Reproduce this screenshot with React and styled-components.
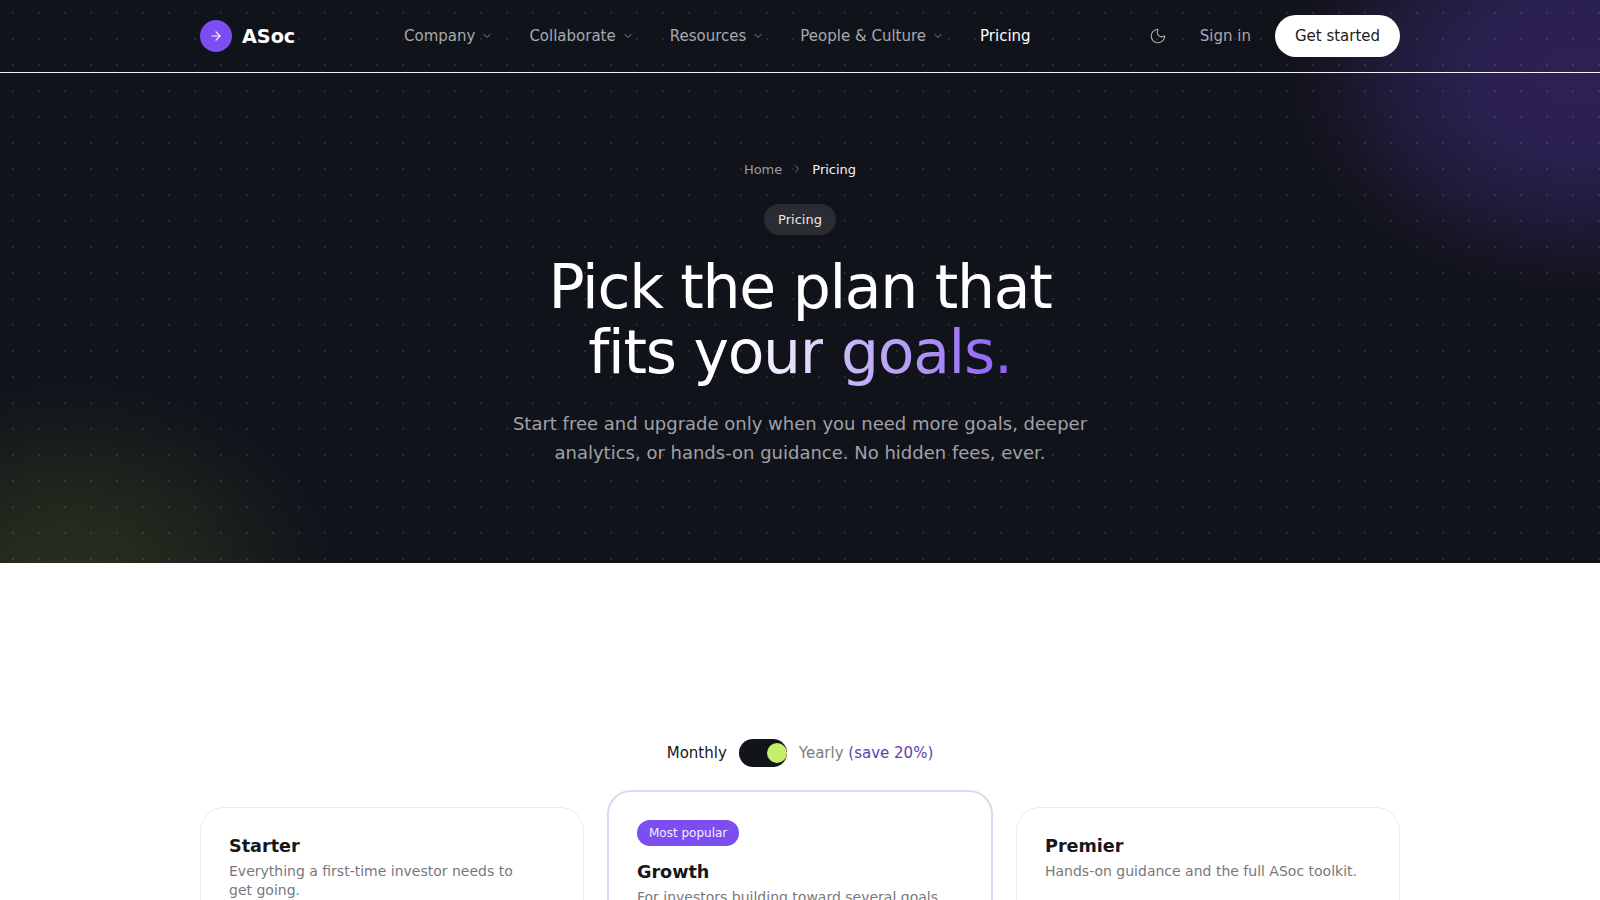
import React from "react";
import styled, { createGlobalStyle } from "styled-components";
import { ArrowRight, ChevronDown, ChevronRight, Moon } from "lucide-react";

const Global = createGlobalStyle`
  html, body { margin: 0; padding: 0; background: #fff; height: 900px; overflow: hidden; }
  body { font-family: "DejaVu Sans", sans-serif; color: #16171b; }
  * { box-sizing: border-box; }
`;

const Dark = styled.div`
  position: relative;
  height: 563px;
  overflow: hidden;
  background-color: #11131b;
  background-image:
    radial-gradient(circle at center, rgba(255,255,255,0.1) 0.8px, transparent 1.1px),
    radial-gradient(ellipse 290px 220px at 1575px 75px, rgb(44,33,82) 0%, rgba(44,33,82,0.95) 35%, rgba(44,33,82,0.55) 65%, rgba(44,33,82,0.18) 85%, rgba(44,33,82,0) 100%),
    radial-gradient(ellipse 275px 205px at 70px 580px, rgb(37,47,30) 0%, rgba(37,47,30,0.85) 30%, rgba(37,47,30,0.4) 65%, rgba(37,47,30,0.12) 85%, rgba(37,47,30,0) 100%);
  background-size: 26px 26px, 100% 100%, 100% 100%;
`;

const Header = styled.header`
  height: 73px;
  border-bottom: 1px solid #f1eff8;
`;

const Bar = styled.div`
  width: 1200px;
  height: 72px;
  margin: 0 auto;
  display: flex;
  align-items: center;
`;

const Brand = styled.div`
  display: flex;
  align-items: center;
  gap: 10px;
  width: 204px;
  font-size: 19.2px;
  font-weight: 700;
  color: #fff;
`;

const BrandMark = styled.span`
  width: 32px;
  height: 32px;
  border-radius: 50%;
  background: #7c4df0;
  color: #fff;
  display: flex;
  align-items: center;
  justify-content: center;
`;

const Nav = styled.nav`
  display: flex;
  align-items: center;
  gap: 36px;
  flex: 1;
`;

const NavItem = styled.a`
  display: flex;
  align-items: center;
  gap: 6px;
  font-size: 15px;
  color: ${(p) => (p.$active ? "#fff" : "#a8a9ad")};
`;

const Actions = styled.div`
  display: flex;
  align-items: center;
  color: #a8a9ad;
  font-size: 15px;
`;

const ThemeButton = styled.span`
  display: flex;
  margin-right: 33px;
`;

const Primary = styled.button`
  margin-left: 24px;
  height: 42px;
  width: 125px;
  border: 0;
  border-radius: 21px;
  background: #fff;
  color: #1b1c20;
  font: 15px "DejaVu Sans", sans-serif;
`;

const Hero = styled.section`
  display: flex;
  flex-direction: column;
  align-items: center;
  padding-top: 88px;
`;

const Crumbs = styled.div`
  display: flex;
  align-items: center;
  gap: 9px;
  height: 16px;
  font-size: 13px;
  color: #9a9ba0;
`;

const CrumbCurrent = styled.span`
  color: #f4f4f5;
`;

const Chip = styled.div`
  margin-top: 27px;
  height: 31px;
  padding: 0 14px;
  border-radius: 16px;
  background: #2a2c31;
  color: #e9e9eb;
  font-size: 13px;
  line-height: 31px;
`;

const Title = styled.h1`
  margin: 20px 0 0;
  font-size: 60px;
  line-height: 65px;
  letter-spacing: -1.3px;
  font-weight: 400;
  color: #fff;
  text-align: center;
`;

const Accent = styled.span`
  background: linear-gradient(90deg, #cbbbf9 0%, #b49bf7 40%, #8b5cf6 100%);
  -webkit-background-clip: text;
  background-clip: text;
  color: transparent;
`;

const FadeWord = styled.span`
  background: linear-gradient(90deg, #fff 35%, #d9cefb 100%);
  -webkit-background-clip: text;
  background-clip: text;
  color: transparent;
`;

const Lead = styled.p`
  margin: 24px 0 0;
  width: 620px;
  font-size: 18px;
  line-height: 29px;
  color: #a0a1a6;
  text-align: center;
`;

const Pricing = styled.section`
  width: 1200px;
  margin: 0 auto;
  padding-top: 176px;
`;

const Toggle = styled.div`
  display: flex;
  justify-content: center;
  align-items: center;
  height: 28px;
  gap: 12px;
  font-size: 15px;
  color: #16171b;
`;

const Yearly = styled.span`
  color: #7b7c82;
`;

const Save = styled.span`
  color: #5b3fb0;
`;

const Switch = styled.span`
  width: 48px;
  height: 28px;
  border-radius: 14px;
  background: #111419;
  display: flex;
  align-items: center;
  justify-content: flex-end;
`;

const Knob = styled.span`
  width: 20px;
  height: 20px;
  border-radius: 50%;
  background: #c5ee6a;
`;

const Cards = styled.div`
  display: grid;
  grid-template-columns: repeat(3, 1fr);
  gap: 24px;
  margin-top: 23px;
  align-items: start;
`;

const Card = styled.article`
  height: 400px;
  margin: ${(p) => (p.$featured ? "0 -1px" : "17px 0 0")};
  padding: ${(p) => (p.$featured ? "28px" : "27px 28px")};
  border-radius: 24px;
  border: ${(p) => (p.$featured ? "2px solid #dcd8f0" : "1px solid #ececf0")};
  background: #fff;
`;

const Badge = styled.span`
  display: inline-block;
  height: 26px;
  padding: 0 12px;
  margin-bottom: 15px;
  border-radius: 13px;
  background: #7c4df0;
  color: #f3eefe;
  font-size: 12px;
  line-height: 26px;
`;

const CardName = styled.h3`
  margin: 0;
  font-size: 17.6px;
  line-height: 23px;
  font-weight: 700;
  color: #16171b;
`;

const CardText = styled.p`
  margin: 4px 0 0;
  text-wrap: pretty;
  font-size: 14px;
  line-height: 19px;
  color: #77787e;
`;

const navItems = ["Company", "Collaborate", "Resources", "People & Culture"];

export default function App() {
  return (
    <>
      <Global />
      <Dark>
        <Header>
          <Bar>
            <Brand>
              <BrandMark><ArrowRight size={14} strokeWidth={2} /></BrandMark>
              ASoc
            </Brand>
            <Nav>
              {navItems.map((n) => (
                <NavItem key={n}>{n}<ChevronDown size={12} strokeWidth={1.5} /></NavItem>
              ))}
              <NavItem $active>Pricing</NavItem>
            </Nav>
            <Actions>
              <ThemeButton><Moon size={18} strokeWidth={1.5} /></ThemeButton>
              <span>Sign in</span>
              <Primary>Get started</Primary>
            </Actions>
          </Bar>
        </Header>
        <Hero>
          <Crumbs>
            <span>Home</span>
            <ChevronRight size={12} strokeWidth={1.5} />
            <CrumbCurrent>Pricing</CrumbCurrent>
          </Crumbs>
          <Chip>Pricing</Chip>
          <Title>
            Pick the plan that<br />
            fits <FadeWord>your</FadeWord> <Accent>goals.</Accent>
          </Title>
          <Lead>Start free and upgrade only when you need more goals, deeper analytics, or hands-on guidance. No hidden fees, ever.</Lead>
        </Hero>
      </Dark>
      <Pricing>
        <Toggle>
          <span>Monthly</span>
          <Switch><Knob /></Switch>
          <Yearly>Yearly <Save>(save 20%)</Save></Yearly>
        </Toggle>
        <Cards>
          <Card>
            <CardName>Starter</CardName>
            <CardText>Everything a first-time investor needs to get going.</CardText>
          </Card>
          <Card $featured>
            <Badge>Most popular</Badge>
            <CardName>Growth</CardName>
            <CardText>For investors building toward several goals at once.</CardText>
          </Card>
          <Card>
            <CardName>Premier</CardName>
            <CardText>Hands-on guidance and the full ASoc toolkit.</CardText>
          </Card>
        </Cards>
      </Pricing>
    </>
  );
}
